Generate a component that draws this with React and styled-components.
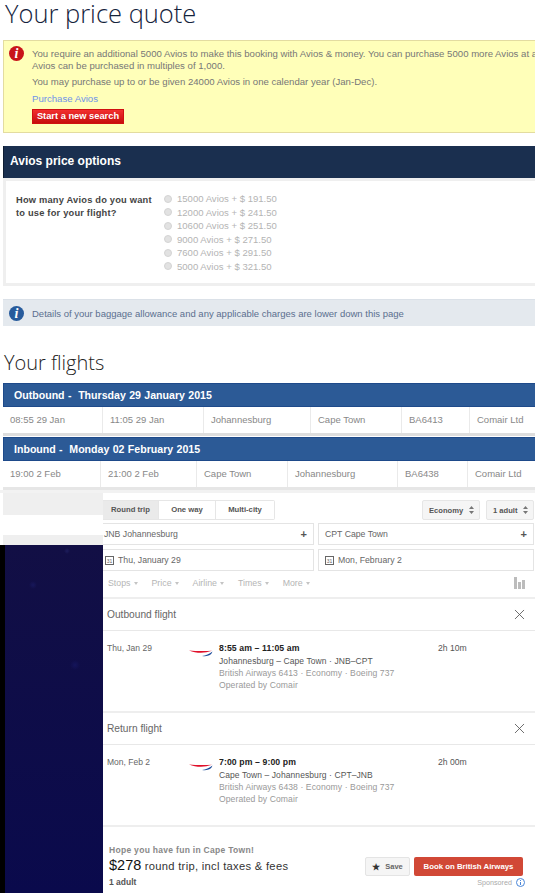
import React from "react";
import styled, { createGlobalStyle } from "styled-components";
import { X } from "lucide-react";

const Global = createGlobalStyle`
  html, body {
    margin: 0;
    padding: 0;
    background: #fff;
    font-family: "Liberation Sans", Arial, sans-serif;
  }
`;

const Page = styled.div`
  width: 535px;
  height: 893px;
  overflow: hidden;
  background: #fff;
`;

const Upper = styled.div`
  width: 660px;
  padding-left: 3px;
`;

const PageTitle = styled.h1`
  margin: 0;
  height: 40px;
  padding-left: 2px;
  font: 300 25.5px/27px "Open Sans", sans-serif;
  color: #14233c;
`;

const Alert = styled.div`
  display: flex;
  gap: 8px;
  box-sizing: border-box;
  height: 93px;
  margin-bottom: 13px;
  padding: 5px;
  background: #ffffb9;
  border: 1px solid #e3dca0;
  color: #777;
  font-size: 9.6px;
  line-height: 12px;
`;

const Badge = styled.span`
  flex: none;
  display: flex;
  align-items: center;
  justify-content: center;
  width: 15px;
  height: 15px;
  border-radius: 50%;
  background: ${(p) => p.$color};
  color: #fff;
  font: italic 700 14px/15px "Liberation Serif", serif;
`;

const AlertBody = styled.div`
  padding-top: 2px;
`;

const Line = styled.div`
  white-space: nowrap;
  margin-bottom: ${(p) => p.$after}px;
`;

const LinkText = styled.a`
  display: block;
  color: #6f94e8;
  margin-bottom: 4px;
  margin-top: 4.5px;
`;

const RedButton = styled.button`
  display: block;
  width: 92px;
  height: 15.5px;
  padding: 0;
  border: 1px solid #d01010;
  background: linear-gradient(#f2302f, #c60d0d);
  color: #fff;
  white-space: nowrap;
  font: 700 9.3px/13px "Liberation Sans", sans-serif;
`;

const NavyBar = styled.h2`
  margin: 0;
  box-sizing: border-box;
  height: 32px;
  padding-left: 6px;
  background: #1a2f4f;
  border-left: 1px solid #0f1d33;
  color: #fff;
  font: 700 12px/31px "Liberation Sans", sans-serif;
`;

const OptionsPanel = styled.div`
  display: flex;
  box-sizing: border-box;
  height: 108px;
  margin-bottom: 13px;
  padding: 11px 10px;
  border: 3px solid #efefef;
`;

const Question = styled.div`
  flex: none;
  width: 148px;
  padding-top: 1.5px;
  font-weight: 700;
  font-size: 9.3px;
  line-height: 13px;
  letter-spacing: 0.2px;
  color: #444;
`;

const OptionList = styled.div`
  display: flex;
  flex-direction: column;
`;

const Option = styled.label`
  flex: none;
  display: flex;
  align-items: center;
  gap: 5px;
  height: 13.5px;
  font-size: 9.55px;
  color: #b4b4b4;
`;

const Radio = styled.input`
  appearance: none;
  margin: 0;
  width: 8px;
  height: 8px;
  border-radius: 50%;
  background: #e2e2e2;
  border: 1px solid #d4d4d4;
`;

const InfoBar = styled.div`
  display: flex;
  align-items: center;
  gap: 8px;
  box-sizing: border-box;
  height: 27px;
  padding-left: 6px;
  background: #e4e9ee;
  border-top: 1px solid #dbe1e8;
  color: #5b6f8e;
  font-size: 9.5px;
`;

const SectionTitle = styled.h2`
  margin: 0;
  height: 57px;
  padding: 23px 0 0 1px;
  box-sizing: border-box;
  font: 300 20px/27px "Open Sans", sans-serif;
  color: #222;
`;

const FlightHeader = styled.div`
  box-sizing: border-box;
  height: 24px;
  padding-left: 10px;
  background: #2c5a96;
  border: 1px solid #1e4a8a;
  border-right: 0;
  color: #fff;
  font: 700 10.6px/22px "Liberation Sans", sans-serif;
  word-spacing: 0.4px;
`;

const FlightRow = styled.div`
  display: grid;
  grid-template-columns: ${(p) => p.$cols};
  height: 26px;
  margin-bottom: ${(p) => p.$gap}px;
  border-bottom: ${(p) => p.$edge};
`;

const Cell = styled.div`
  padding-left: 7px;
  border-right: 1px solid #eaeaea;
  color: #888;
  font-size: 9.5px;
  line-height: 26px;
`;

const Lower = styled.div`
  display: flex;
  height: 400px;
  border-top: 3px solid #f2f2f2;
`;

const Side = styled.div`
  flex: none;
  width: 103px;
  display: flex;
  flex-direction: column;
`;

const SideGrey = styled.div`
  flex: none;
  height: ${(p) => p.$h}px;
  margin-left: 3px;
  margin-bottom: ${(p) => p.$after}px;
  background: #efefef;
`;

const Dark = styled.div`
  flex: 1;
  border-left: 5px solid #000;
  background:
    radial-gradient(circle at 62px 6px, #1d1d5c 0, transparent 3px),
    radial-gradient(circle at 28px 40px, #17175a 0, transparent 4px),
    radial-gradient(circle at 70px 120px, #14145a 0, transparent 5px),
    linear-gradient(#120f45, #0a0a4c);
`;

const Main = styled.div`
  flex: 1;
  min-width: 0;
`;

const Toolbar = styled.div`
  display: flex;
  justify-content: space-between;
  height: 20px;
  padding: 7px 1px 3px 0;
`;

const Segments = styled.div`
  display: flex;
  border: 1px solid #e6e6e6;
  border-left: 0;
  border-radius: 0 2px 2px 0;
`;

const Segment = styled.div`
  width: ${(p) => p.$w}px;
  text-align: center;
  font: 700 7.7px/18px "Liberation Sans", sans-serif;
  color: #555;
  background: ${(p) => (p.$active ? "#eaeaea" : "#fff")};
  border-right: ${(p) => (p.$last ? "0" : "1px solid #e6e6e6")};
`;

const Selects = styled.div`
  display: flex;
  gap: 6px;
`;

const Select = styled.div`
  display: flex;
  align-items: center;
  justify-content: space-between;
  box-sizing: border-box;
  width: ${(p) => p.$w}px;
  padding: 0 5px 0 6px;
  background: #f5f5f5;
  border: 1px solid #e6e6e6;
  border-radius: 2px;
  font: 700 7.6px "Liberation Sans", sans-serif;
  color: #555;
`;

const FieldGrid = styled.div`
  display: grid;
  grid-template-columns: 211px 216px;
  column-gap: 4px;
  row-gap: 4px;
`;

const Field = styled.div`
  display: flex;
  align-items: center;
  justify-content: space-between;
  gap: 4px;
  box-sizing: border-box;
  height: 22px;
  padding: 0 6px 0 ${(p) => p.$pad}px;
  border: 1px solid #e4e4e4;
  border-left: ${(p) => (p.$open ? "0" : "1px solid #e4e4e4")};
  color: #666;
  font-size: 8.7px;
`;

const FieldLabel = styled.span`
  display: flex;
  align-items: center;
  gap: 4px;
  flex: 1;
`;

const Plus = styled.span`
  font-weight: 700;
  font-size: 11px;
  color: #555;
`;

const Filters = styled.div`
  display: flex;
  align-items: center;
  justify-content: space-between;
  box-sizing: border-box;
  height: 28px;
  padding: 0 10px 2px 5px;
  border-bottom: 2px solid #eee;
`;

const FilterList = styled.div`
  display: flex;
  gap: 14px;
`;

const Filter = styled.span`
  display: flex;
  align-items: center;
  gap: 3px;
  color: #b5b5b5;
  font-size: 8.8px;
`;

const Caret = styled.span`
  width: 0;
  height: 0;
  border-left: 2px solid transparent;
  border-right: 2px solid transparent;
  border-top: 3px solid #c4c4c4;
`;

const Leg = styled.section`
  box-sizing: border-box;
  height: ${(p) => p.$h}px;
  border-bottom: 2px solid #eee;
`;

const LegHead = styled.div`
  display: flex;
  align-items: center;
  justify-content: space-between;
  box-sizing: border-box;
  height: 32px;
  padding: 0 7px 0 4px;
  border-bottom: 1px solid #e8e8e8;
  color: #666;
  font-size: 10.2px;
`;

const LegBody = styled.div`
  display: grid;
  grid-template-columns: 82px 30px 219px auto;
  padding: 11px 0 0 4px;
  line-height: 12.3px;
`;

const LegDate = styled.div`
  color: #666;
  font-size: 8.5px;
`;

const Logo = styled.svg`
  display: block;
  margin-top: 8px;
`;

const Times = styled.div`
  color: #222;
  font-weight: 700;
  font-size: 8.7px;
  letter-spacing: 0.1px;
  margin-bottom: 0.5px;
`;

const Route = styled.div`
  color: #555;
  font-size: 8.5px;
  letter-spacing: 0.08px;
`;

const Muted = styled.div`
  color: #999;
  font-size: 8.6px;
  letter-spacing: 0.08px;
`;

const Duration = styled.div`
  color: #555;
  font-size: 8.6px;
`;

const Footer = styled.div`
  display: flex;
  justify-content: space-between;
  padding: 17px 12px 0 6px;
`;

const Hope = styled.div`
  font-weight: 700;
  font-size: 8.5px;
  line-height: 13px;
  letter-spacing: 0.3px;
  color: #888;
`;

const Price = styled.div`
  font-size: 11.2px;
  line-height: 18px;
  letter-spacing: 0.3px;
  color: #333;
  b {
    font-weight: 400;
    font-size: 14.5px;
    line-height: 1;
    color: #111;
    letter-spacing: 0;
  }
`;

const Adults = styled.div`
  font-weight: 700;
  font-size: 8.5px;
  line-height: 14px;
  color: #555;
`;

const Actions = styled.div`
  padding-top: 13px;
`;

const ActionRow = styled.div`
  display: flex;
  gap: 4px;
`;

const SaveButton = styled.div`
  display: flex;
  align-items: center;
  justify-content: center;
  gap: 5px;
  box-sizing: border-box;
  width: 45px;
  height: 19px;
  background: #f5f5f5;
  border: 1px solid #e4e4e4;
  border-radius: 2px;
  font-weight: 700;
  font-size: 7.5px;
  color: #666;
  span {
    color: #333;
    font-size: 9px;
  }
`;

const BookButton = styled.div`
  width: 109px;
  height: 19px;
  background: #d14836;
  border-radius: 2px;
  color: #fff;
  text-align: center;
  font-weight: 700;
  font-size: 7.8px;
  line-height: 19px;
`;

const Sponsored = styled.div`
  display: flex;
  align-items: center;
  justify-content: flex-end;
  gap: 4px;
  margin: 2px -2px 0 0;
  color: #aaa;
  font-size: 7.2px;
`;

const SelectArrows = () => (
  <svg width="5" height="8" viewBox="0 0 5 8" fill="#777">
    <path d="M2.5 0 5 3H0zM2.5 8 0 5h5z" />
  </svg>
);

const CalendarIcon = () => (
  <svg width="9" height="9" viewBox="0 0 9 9">
    <rect x="0.5" y="0.5" width="8" height="8" fill="#fff" stroke="#666" />
    <text x="4.5" y="7" fontSize="5" textAnchor="middle" fill="#666" fontFamily="Liberation Sans">31</text>
  </svg>
);

const ChartIcon = () => (
  <svg width="11" height="12" viewBox="0 0 11 12" fill="#bcbcbc">
    <rect x="0" y="0" width="3" height="12" />
    <rect x="4" y="5" width="3" height="7" />
    <rect x="8" y="3" width="3" height="9" />
  </svg>
);

const BaLogo = () => (
  <Logo width="24" height="8" viewBox="0 0 24 8">
    <path d="M0 .4C7 1.2 15 1.2 23 .8 15 3.6 7 3.2 0 .4z" fill="#e0102a" />
    <path d="M13 6C17 5.6 20 4.2 23.5 1.6 22.5 5 19 7 13 6z" fill="#1f4f9c" />
  </Logo>
);

const InfoDot = () => (
  <svg width="9" height="9" viewBox="0 0 9 9" fill="none" stroke="#4a86d8">
    <circle cx="4.5" cy="4.5" r="4" />
    <path d="M4.5 4v3M4.5 2v1" />
  </svg>
);

const prices = [
  "15000 Avios + $ 191.50",
  "12000 Avios + $ 241.50",
  "10600 Avios + $ 251.50",
  "9000 Avios + $ 271.50",
  "7600 Avios + $ 291.50",
  "5000 Avios + $ 321.50",
];

const outbound = ["08:55 29 Jan", "11:05 29 Jan", "Johannesburg", "Cape Town", "BA6413", "Comair Ltd"];
const inbound = ["19:00 2 Feb", "21:00 2 Feb", "Cape Town", "Johannesburg", "BA6438", "Comair Ltd"];

const FlightLeg = ({ title, h, date, times, route, flight, duration }) => (
  <Leg $h={h}>
    <LegHead>
      {title}
      <X size={17} color="#555" strokeWidth={1.2} />
    </LegHead>
    <LegBody>
      <LegDate>{date}</LegDate>
      <BaLogo />
      <div>
        <Times>{times}</Times>
        <Route>{route}</Route>
        <Muted>{flight}</Muted>
        <Muted>Operated by Comair</Muted>
      </div>
      <Duration>{duration}</Duration>
    </LegBody>
  </Leg>
);

export default function App() {
  return (
    <Page>
      <Global />
      <Upper>
        <PageTitle>Your price quote</PageTitle>
        <Alert>
          <Badge $color="#c8141a">i</Badge>
          <AlertBody>
            <Line $after={0}>
              You require an additional 5000 Avios to make this booking with Avios &amp; money. You can purchase 5000 more Avios at a
            </Line>
            <Line $after={4}>Avios can be purchased in multiples of 1,000.</Line>
            <Line $after={4}>You may purchase up to or be given 24000 Avios in one calendar year (Jan-Dec).</Line>
            <LinkText>Purchase Avios</LinkText>
            <RedButton>Start a new search</RedButton>
          </AlertBody>
        </Alert>
        <NavyBar>Avios price options</NavyBar>
        <OptionsPanel>
          <Question>
            How many Avios do you want
            <br />
            to use for your flight?
          </Question>
          <OptionList>
            {prices.map((p) => (
              <Option key={p}>
                <Radio type="radio" disabled />
                {p}
              </Option>
            ))}
          </OptionList>
        </OptionsPanel>
        <InfoBar>
          <Badge $color="#275b9c">i</Badge>
          Details of your baggage allowance and any applicable charges are lower down this page
        </InfoBar>
        <SectionTitle>Your flights</SectionTitle>
        <FlightHeader>Outbound -&nbsp; Thursday 29 January 2015</FlightHeader>
        <FlightRow $cols="100px 101px 107px 91px 68px 1fr" $gap={1} $edge="3px solid #ddd">
          {outbound.map((c) => (
            <Cell key={c}>{c}</Cell>
          ))}
        </FlightRow>
        <FlightHeader>Inbound -&nbsp; Monday 02 February 2015</FlightHeader>
        <FlightRow $cols="98px 96px 91px 110px 70px 1fr" $gap={0} $edge="3px solid #e6e6e6">
          {inbound.map((c) => (
            <Cell key={c}>{c}</Cell>
          ))}
        </FlightRow>
      </Upper>
      <Lower>
        <Side>
          <SideGrey $h={22} $after={20} />
          <SideGrey $h={10} $after={0} />
          <Dark />
        </Side>
        <Main>
          <Toolbar>
            <Segments>
              <Segment $w={55} $active>Round trip</Segment>
              <Segment $w={56}>One way</Segment>
              <Segment $w={58} $last>Multi-city</Segment>
            </Segments>
            <Selects>
              <Select $w={58}>Economy <SelectArrows /></Select>
              <Select $w={48}>1 adult <SelectArrows /></Select>
            </Selects>
          </Toolbar>
          <FieldGrid>
            <Field $pad={1} $open><FieldLabel>JNB Johannesburg</FieldLabel><Plus>+</Plus></Field>
            <Field $pad={6}><FieldLabel>CPT Cape Town</FieldLabel><Plus>+</Plus></Field>
            <Field $pad={2} $open><FieldLabel><CalendarIcon /> Thu, January 29</FieldLabel></Field>
            <Field $pad={6}><FieldLabel><CalendarIcon /> Mon, February 2</FieldLabel></Field>
          </FieldGrid>
          <Filters>
            <FilterList>
              {["Stops", "Price", "Airline", "Times", "More"].map((f) => (
                <Filter key={f}>{f} <Caret /></Filter>
              ))}
            </FilterList>
            <ChartIcon />
          </Filters>
          <FlightLeg
            title="Outbound flight"
            h={114}
            date="Thu, Jan 29"
            times="8:55 am – 11:05 am"
            route="Johannesburg – Cape Town · JNB–CPT"
            flight="British Airways 6413 · Economy · Boeing 737"
            duration="2h 10m"
          />
          <FlightLeg
            title="Return flight"
            h={114}
            date="Mon, Feb 2"
            times="7:00 pm – 9:00 pm"
            route="Cape Town – Johannesburg · CPT–JNB"
            flight="British Airways 6438 · Economy · Boeing 737"
            duration="2h 00m"
          />
          <Footer>
            <div>
              <Hope>Hope you have fun in Cape Town!</Hope>
              <Price><b>$278</b> round trip, incl taxes &amp; fees</Price>
              <Adults>1 adult</Adults>
            </div>
            <Actions>
              <ActionRow>
                <SaveButton><span>★</span> Save</SaveButton>
                <BookButton>Book on British Airways</BookButton>
              </ActionRow>
              <Sponsored>Sponsored <InfoDot /></Sponsored>
            </Actions>
          </Footer>
        </Main>
      </Lower>
    </Page>
  );
}
